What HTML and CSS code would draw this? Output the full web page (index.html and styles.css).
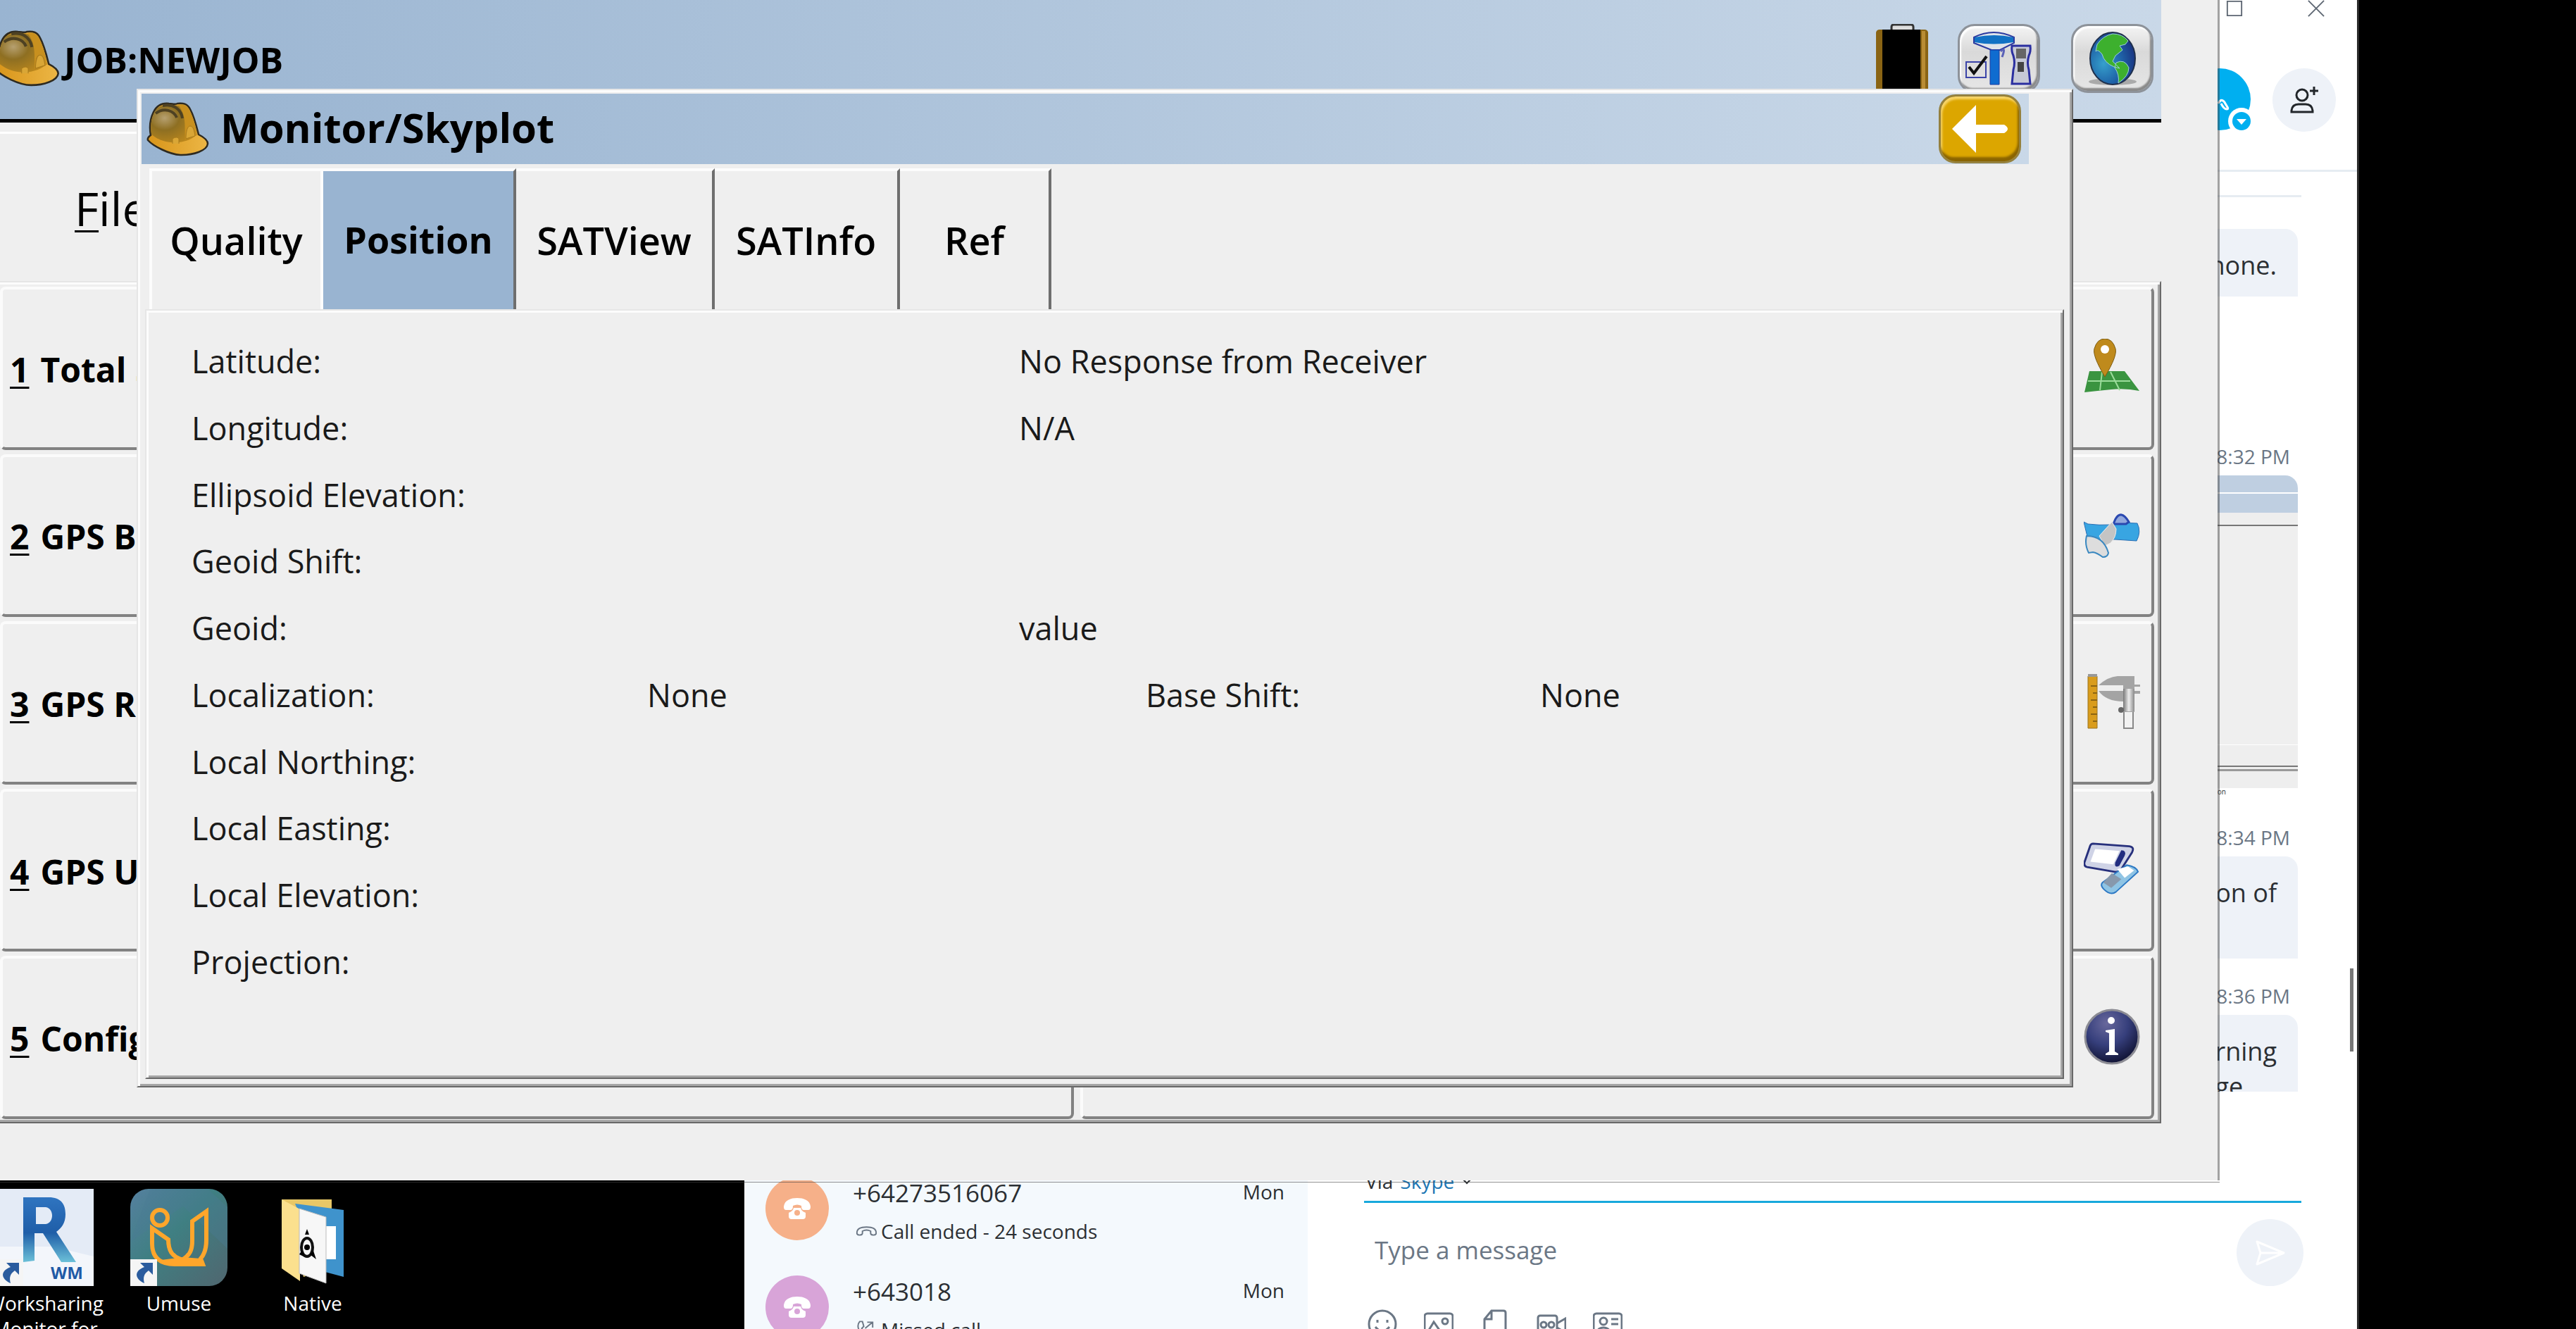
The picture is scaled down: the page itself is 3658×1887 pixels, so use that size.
FILE: index.html
```html
<!DOCTYPE html>
<html lang="en">
<head>
<meta charset="utf-8">
<title>Monitor/Skyplot</title>
<link rel="stylesheet" href="styles.css">
</head>
<body>
<svg class="defs" aria-hidden="true">
  <defs>
    <linearGradient id="brim" x1="0" y1="0" x2="1" y2="0"><stop offset="0" stop-color="#d8951a"/><stop offset="1" stop-color="#ecb645"/></linearGradient>
    <radialGradient id="shell" cx=".3" cy=".35" r=".8"><stop offset="0" stop-color="#b6a070"/><stop offset=".4" stop-color="#8e6f22"/><stop offset="1" stop-color="#c08a1c"/></radialGradient>
    <linearGradient id="metal" x1="0" y1="0" x2="1" y2="0"><stop offset="0" stop-color="#777"/><stop offset=".5" stop-color="#eee"/><stop offset="1" stop-color="#888"/></linearGradient>
    <radialGradient id="sea" cx=".3" cy=".6" r=".8"><stop offset="0" stop-color="#36a0cc"/><stop offset=".5" stop-color="#1f63a8"/><stop offset="1" stop-color="#182878"/></radialGradient>
    <radialGradient id="orb" cx=".4" cy=".25" r=".8"><stop offset="0" stop-color="#68689c"/><stop offset=".5" stop-color="#363f7c"/><stop offset="1" stop-color="#0c0e2c"/></radialGradient>
    <linearGradient id="umuse" x1="0" y1="0" x2="1" y2="1"><stop offset="0" stop-color="#55809f"/><stop offset=".45" stop-color="#3f7f82"/><stop offset="1" stop-color="#50666f"/></linearGradient>
    <linearGradient id="revit" x1="0" y1="0" x2="0" y2="1"><stop offset="0" stop-color="#2f74c0"/><stop offset=".55" stop-color="#1f5ea8"/><stop offset="1" stop-color="#6cc0d8"/></linearGradient>
    <symbol id="helmet" viewBox="0 0 90 77">
      <path d="M7 47C5 36 6 24 11 14 16 4 24 1 33 2c5 0 8 2 12 0 8-1 14 0 18 8 6 11 9 24 12 36 8 4 13 8 13 13-1 10-20 16-37 16C34 75 10 62 3 54c-1-3 1-5 4-7z" fill="url(#brim)" stroke="#2e2a20" stroke-width="2.500"/>
      <path d="M8 46C6 34 8 22 13 13 18 5 26 4 34 4c10 0 18 1 24 8 8 10 12 22 14 34-10 12-42 18-64 0z" fill="url(#shell)"/>
      <path d="M46 4c8-2 14 1 17 9 5 10 8 22 10 34l-17 6c-1-20 2-34-10-49z" fill="#c8901f"/>
      <path d="M24 5c14-3 26 4 28 18M14 16c12-9 26-4 30 6" fill="none" stroke="#4e4122" stroke-width="4"/>
      <path d="M57 52c0-10 2-18 6-18 5 0 6 8 7 14zM38 59v-7q6-4 9 0v7" fill="#d9a636" stroke="#a87a1c" stroke-width="1"/>
    </symbol>
    <symbol id="phone" viewBox="0 0 40 32">
      <path d="M1 13C2 4 11 1 20 1s18 3 19 12c0 4-1 5-4 5h-5c-3 0-4-2-4-6-4-2-8-2-12 0 0 4-1 6-4 6H5c-3 0-4-1-4-5z" fill="#fff"/>
      <path d="M15 15h10c1 4 3 5 7 7v5q0 4-4 4H12q-4 0-4-4v-5c4-2 6-3 7-7z" fill="#fff"/><circle cx="20" cy="22" r="4" class="hub"/>
    </symbol>
    <symbol id="shortcut" viewBox="0 0 38 38">
      <path d="M0 0h38v38H0z" fill="#f5f5f5"/><path d="M14 5h18v17l-6-6c-7 5-8 10-6 18C5 27 6 16 20 11z" fill="#2b5c9e"/>
    </symbol>
  </defs>
</svg>

<main class="desktop">
  <section class="shortcuts" aria-label="Desktop shortcuts">
    <a href="#worksharing" class="shortcut">
      <svg viewBox="0 0 138 138"><path d="M0 0h138v138H0z" fill="#e4ebf6"/><path d="M0 82h80l58 14v42H0z" fill="#f3f6fb"/>
        <path d="M38 12h36c18 0 24 10 24 24 0 13-6 20-13 25l28 43H92L66 63H54v39l-16 2z" fill="url(#revit)"/><path d="M56 26h14c12 2 12 22 0 24H56z" fill="#e4ebf6"/>
        <text x="77" y="128" class="wm">WM</text><use href="#shortcut" y="100" width="38" height="38"/></svg>
      <span>Worksharing<br>Monitor for</span>
    </a>
    <a href="#umuse" class="shortcut">
      <svg viewBox="0 0 138 138"><rect width="138" height="138" rx="26" fill="url(#umuse)"/><path d="M0 75l75-50 63 60V26L110 0H28z" fill="#4a7a95" opacity=".35"/>
        <circle cx="42" cy="41" r="11" fill="none" stroke="#ffa62b" stroke-width="6"/>
        <path d="M31 56v22c0 20 12 29 32 29h40l-3-8c6-7 8-16 8-26V32L88 46v28c0 14-4 20-14 27-14-5-20-12-20-29z" fill="none" stroke="#ffa62b" stroke-width="6"/>
        <path d="M44 101l30-4 26 2 4 9H62z" fill="#ffa62b"/><use href="#shortcut" y="100" width="38" height="38"/></svg>
      <span>Umuse</span>
    </a>
    <a href="#native" class="shortcut">
      <svg viewBox="0 0 138 138"><path d="M25 15h71v98l-40 12z" fill="#e8c766"/><path d="M44 21l69 9v95l-30-8z" fill="#3f93cc"/><path d="M88 53h14v47H84z" fill="#fff"/><path d="M25 15l26 14v102L25 113z" fill="#fbe08e"/>
        <path d="M50 28l38 12v94l-38-14z" fill="#f7f7f7" stroke="#bbb"/><ellipse cx="61" cy="83" rx="8" ry="13" fill="none" stroke="#111" stroke-width="4"/><circle cx="61" cy="83" r="4"/><path d="M58 65l3-8 3 8zM50 93l4-6 4 10zM65 93l5-5 4 12z"/></svg>
      <span>Native</span>
    </a>
  </section>

  <section class="skype" aria-label="Skype">
    <ul class="calls">
      <li class="call orange">
        <span class="avatar"><svg viewBox="0 0 40 32"><use href="#phone"/></svg></span>
        <div class="who"><strong>+64273516067</strong>
          <span class="what"><svg viewBox="0 0 32 16"><path d="M2 12C1 4 8 2 16 2s15 2 14 10c-2 3-8 2-8-1V8c-4-2-8-2-12 0v3c0 3-6 4-8 1z"/></svg>Call ended - 24 seconds</span></div>
        <time>Mon</time>
      </li>
      <li class="call violet">
        <span class="avatar"><svg viewBox="0 0 40 32"><use href="#phone"/></svg></span>
        <div class="who"><strong>+643018</strong>
          <span class="what missed"><svg viewBox="0 0 32 28"><path d="M6 2q-5 6 0 14 6 9 14 11l3-5-6-5-4 2-4-7 3-3-2-7zM14 12L25 3M17 3h8v8"/></svg>Missed call</span></div>
        <time>Mon</time>
      </li>
    </ul>

    <div class="chat">
      <header class="chat-head">
        <div class="caption">
          <button type="button" aria-label="Maximise"><svg viewBox="0 0 26 26"><path d="M2 2h22v22H2z"/></svg></button>
          <button type="button" aria-label="Close"><svg viewBox="0 0 26 26"><path d="M1 1l24 24M25 1L1 25"/></svg></button>
        </div>
        <div class="people">
          <svg class="contact" viewBox="0 0 88 88"><circle cx="44" cy="44" r="44" fill="#00aff0"/><path d="M42 50c4-8 8-4 10 0s6 8 2 8-8-8-8-8" fill="none" stroke="#fff" stroke-width="3"/><circle cx="75" cy="75" r="19" fill="#fff"/><circle cx="75" cy="75" r="13" fill="#00aff0"/><path d="M68 72h14l-7 8z" fill="#fff"/></svg>
          <button type="button" class="add" aria-label="Add people"><svg viewBox="0 0 40 40"><circle cx="17" cy="13" r="8"/><path d="M2 37v-2q1-9 10-9h10q9 0 10 9v2zM34 1v12M28 7h12"/></svg></button>
        </div>
      </header>
      <div class="history">
        <hr>
        <p class="bubble one">phone.</p>
        <time>8:32 PM</time>
        <div class="photo"></div>
        <small>Projection</small>
        <time>8:34 PM</time>
        <p class="bubble two">on of</p>
        <time>8:36 PM</time>
        <p class="bubble three"><span>rning<br>ge</span></p>
      </div>
      <form class="composer">
        <div class="via">Via <a href="#skype">Skype</a> <svg viewBox="0 0 16 10"><path d="M1 1l7 7 7-7"/></svg></div>
        <div class="entry"><input type="text" placeholder="Type a message" aria-label="Type a message">
          <button type="button" aria-label="Send"><svg viewBox="0 0 44 36"><path d="M3 2l38 16L3 34l5-16zM8 18h32"/></svg></button></div>
        <div class="tools">
          <button type="button" aria-label="Emoji"><svg viewBox="0 0 42 42"><circle cx="21" cy="21" r="19"/><path d="M14 15v4M28 15v4M11 25q10 12 20 0"/></svg></button>
          <button type="button" aria-label="Picture"><svg viewBox="0 0 42 42"><rect x="1" y="6" width="40" height="32" rx="4"/><circle cx="30" cy="17" r="4"/><path d="M3 36l11-18 14 20"/></svg></button>
          <button type="button" aria-label="File"><svg viewBox="0 0 42 42"><path d="M16 2h17q3 0 3 3v34H6V14zM16 2v12H6"/></svg></button>
          <button type="button" aria-label="Video"><svg viewBox="0 0 42 42"><rect x="2" y="9" width="27" height="26" rx="3"/><circle cx="10" cy="22" r="4"/><circle cx="21" cy="22" r="4"/><path d="M29 20l12-7v20l-12-7"/></svg></button>
          <button type="button" aria-label="Contact"><svg viewBox="0 0 42 42"><rect x="1" y="6" width="40" height="32" rx="4"/><circle cx="15" cy="17" r="5"/><path d="M5 36q1-10 10-10t10 10M26 14h10M26 21h10"/></svg></button>
        </div>
      </form>
      <span class="thumb"></span>
    </div>
  </section>

  <section class="app" aria-label="Survey application">
    <header class="title">
      <svg class="helmet" viewBox="0 0 90 77"><use href="#helmet"/></svg>
      <h1>JOB:NEWJOB</h1>
      <svg class="battery" viewBox="0 0 76 98"><rect x="23" y="1" width="31" height="12" rx="3" fill="#ddd" stroke="#333" stroke-width="3"/><path d="M1 98V12q1-4 5-4h64q4 0 5 4v86z" fill="#8a6414"/><path d="M10 8h54v90H10z"/><path d="M66 10h5v88h-5z" fill="#b98c34"/></svg>
      <button type="button" class="tile" aria-label="Receiver settings"><svg viewBox="0 0 104 84"><path d="M16 12q28-14 57 0v8L53 30H41L16 20z" fill="#dfe4ea" stroke="#2b3aa0" stroke-width="2"/><path d="M17 12q28-6 55 0v7q-28 5-55 0z" fill="#1272c4"/><path d="M39 30h13v49H39z" fill="#0f6cd0" stroke="#1a3aa0"/><path d="M54 32q8-8 2 8" fill="none" stroke="#5b62b8" stroke-width="3"/><path d="M5 47h28v22H5z" fill="none" stroke="#3b44a8" stroke-width="2"/><path d="M9 54l7 9L34 39" fill="none" stroke="#111" stroke-width="4"/><path d="M70 24h26q1 8-2 14-3 10 0 20l2 20H70l2-20q3-10 0-20-3-6-2-14z" fill="#c6c9d6" stroke="#2b2fa0" stroke-width="3"/><path d="M76 28h14v14H76z" fill="#666"/><path d="M78 47h9v14h-9z" fill="#444"/></svg></button>
      <button type="button" class="tile" aria-label="World"><svg viewBox="0 0 104 84"><ellipse cx="52" cy="75" rx="34" ry="5" fill="#aaa"/><ellipse cx="52" cy="42" rx="32" ry="37" fill="url(#sea)" stroke="#20304c" stroke-width="2"/><path d="M30 22q8-12 22-15 14 0 22 10l-4 5-8 2 4 6-10 8-4 8 10 10-8-2q-14-6-17-18-6-8-9-4zM57 48q12-6 18 7 0 12-15 22 2-12-5-22z" fill="#3db02e" stroke="#9cd0d8" stroke-width="1"/></svg></button>
    </header>
    <nav class="menu"><a href="#file"><u>F</u>ile</a></nav>
    <div class="board">
      <button type="button"><u>1</u> Total Station</button>
      <button type="button" class="side" aria-label="Map"><svg viewBox="0 0 80 80"><path d="M8 46h50l21 28q-20-4-40-2T1 76z" fill="#3a9440"/><path d="M6 60h60M26 47l-3 26M38 47l13 26" stroke="#9bdc9b" stroke-width="2" fill="none"/><path d="M30 54Q12 24 15 14 19 0 30 0t15 14q3 10-15 40z" fill="#bf8a1c" stroke="#7d5c12"/><ellipse cx="30" cy="15" rx="6" ry="6" fill="#fff"/></svg></button>
      <button type="button"><u>2</u> GPS Base</button>
      <button type="button" class="side" aria-label="Satellite"><svg viewBox="0 0 80 80"><path d="M0 22l6 3q15 2 34 1l12-3 24 1q6 12-1 25l-30-2H6z" fill="#38a5e2" stroke="#2b6fb4"/><path d="M45 18q8-14 19 4l-4 3H42z" fill="#93a8dc" stroke="#2a48b0" stroke-width="3"/><path d="M22 42l18-20 6 10q0 12-8 20l-8 4z" fill="#c4c4c4" stroke="#eee"/><path d="M4 42q24 0 31 24-1 6-8 6-8-6-14-7l-6 1Q1 54 4 42z" fill="#ddd" stroke="#3a88c0" stroke-width="2"/></svg></button>
      <button type="button"><u>3</u> GPS Rover</button>
      <button type="button" class="side" aria-label="Measure"><svg viewBox="0 0 80 80"><path d="M6 4h13v74H6z" fill="#d99c1c" stroke="#9a7420"/><path d="M6 3h13" stroke="#999" stroke-width="4"/><path d="M10 18h9M13 28h6M10 38h9M13 48h6M10 58h9M13 68h6" stroke="#8c6412" stroke-width="2"/><path d="M57 50h13v28H57z" fill="#f2f2f2" stroke="#888" stroke-width="2"/><path d="M21 17Q34 5 48 4h24v12h8v3h-8v6h8v4h-8v26H56V40q-24 0-35-15h35v-8z" fill="#a4a4a4"/><path d="M56 22h16v32H56z" fill="url(#metal)"/><circle cx="53" cy="52" r="4" fill="#666"/></svg></button>
      <button type="button"><u>4</u> GPS Utilities</button>
      <button type="button" class="side" aria-label="Devices"><svg viewBox="0 0 84 80"><path d="M14 2l54 4q8 1 4 9L56 40q-3 5-10 4L5 37q-5-1-4-7L9 7q1-5 5-5z" fill="#cfd3e6" stroke="#27307c" stroke-width="3"/><path d="M17 10l36 3-9 20-34-4z" fill="#fff"/><path d="M56 12q8 0 5 8l-8 15q-8 4-6-5z" fill="#222d80"/><path d="M64 34q14 2 17 10L48 74q-8 6-18-4-6-6-2-10z" fill="#8fc4e4" stroke="#2b78c4" stroke-width="2"/><path d="M50 40l16-4 9 6-14 11z" fill="#fff"/><path d="M42 46l14 9-15 13-12-8z" fill="#8798ac"/></svg></button>
      <button type="button"><u>5</u> Configure</button>
      <button type="button" class="side" aria-label="Information"><svg viewBox="0 0 80 80"><circle cx="40" cy="40" r="38" fill="url(#orb)" stroke="#8c8c94" stroke-width="3"/><circle cx="39" cy="17" r="5" fill="#fff"/><path d="M31 31l13-2v32l5 3v2H31v-2l5-3V35l-5-2z" fill="#fff"/></svg></button>
    </div>

    <section class="dialog" role="dialog" aria-label="Monitor/Skyplot">
      <header class="title">
        <svg class="helmet" viewBox="0 0 90 77"><use href="#helmet"/></svg>
        <h2>Monitor/Skyplot</h2>
        <button type="button" class="tile back" aria-label="Back"><svg viewBox="0 0 104 84"><path d="M12 42L46 8v28h40q10 6 0 12H46v28z" fill="#fff"/></svg></button>
      </header>
      <div class="tabs" role="tablist">
        <button type="button" role="tab" class="w1">Quality</button>
        <button type="button" role="tab" class="w2" aria-selected="true">Position</button>
        <button type="button" role="tab" class="w3">SATView</button>
        <button type="button" role="tab" class="w4">SATInfo</button>
        <button type="button" role="tab" class="w5">Ref</button>
      </div>
      <dl class="panel">
        <dt>Latitude:</dt><dd class="value">No Response from Receiver</dd>
        <dt>Longitude:</dt><dd class="value">N/A</dd>
        <dt>Ellipsoid Elevation:</dt><dd class="value"></dd>
        <dt>Geoid Shift:</dt><dd class="value"></dd>
        <dt>Geoid:</dt><dd class="value">value</dd>
        <dt>Localization:</dt><dd class="near">None</dd><dt class="base">Base Shift:</dt><dd class="far">None</dd>
        <dt>Local Northing:</dt><dd class="value"></dd>
        <dt>Local Easting:</dt><dd class="value"></dd>
        <dt>Local Elevation:</dt><dd class="value"></dd>
        <dt>Projection:</dt><dd class="value"></dd>
      </dl>
    </section>
  </section>
</main>
</body>
</html>
```
FILE: styles.css
```css
* { box-sizing: border-box; }
body { margin: 0; background: #000; font-family: "Open Sans", "Noto Sans", sans-serif; color: #000; }
h1, h2, p, ul, dl, dd { margin: 0; padding: 0; }
button { font: inherit; color: inherit; background: none; border: 0; padding: 0; }
svg { display: block; flex: none; }
a { color: inherit; text-decoration: none; }
.defs { position: absolute; width: 0; height: 0; }

.desktop { position: relative; height: 100vh; overflow: hidden; background: #000; }

/* desktop shortcuts */
.shortcuts { position: absolute; left: -31px; top: 1688px; display: flex; }
.shortcut { width: 190px; display: flex; flex-direction: column; align-items: center; gap: 6px; color: #fff; font-size: 28px; line-height: 36px; text-align: center; }
.shortcut svg { width: 138px; height: 138px; }
.wm { font: bold 24px "Open Sans", sans-serif; fill: #1f5aa6; }

/* messenger window */
.skype { position: absolute; left: 1057px; right: 308px; top: 0; bottom: 0; display: grid; grid-template-columns: 800px 1fr; background: #fff; border-right: 3px solid #2b2b2b; color: #2b2f33; overflow: hidden; }
.calls { list-style: none; background: #f4f9fd; display: flex; flex-direction: column; justify-content: flex-end; height: calc(100vh + 39px); }
.call { height: 140px; display: flex; align-items: center; padding: 0 33px 0 30px; gap: 34px; }
.avatar { width: 90px; height: 90px; border-radius: 50%; display: grid; place-items: center; }
.avatar svg { width: 40px; height: 32px; }
.orange .avatar, .orange .hub { background: #f6b089; fill: #f6b089; }
.violet .avatar, .violet .hub { background: #d8a4d8; fill: #d8a4d8; }
.who { flex: 1; display: flex; flex-direction: column; gap: 8px; padding-top: 10px; }
.who strong { font-weight: 400; font-size: 35px; line-height: 46px; }
.what { display: flex; align-items: center; gap: 5px; padding-left: 4px; font-size: 28px; line-height: 46px; }
.what svg { width: 31px; height: 16px; fill: none; stroke: #6b7785; stroke-width: 2px; }
.what.missed svg { height: 28px; }
.call time { align-self: flex-start; margin-top: 26px; font-size: 28px; line-height: 40px; }

.chat { position: relative; display: flex; flex-direction: column; height: 100vh; }
.chat-head { height: 244px; border-bottom: 3px solid #e6ecf2; flex: none; }
.caption { display: flex; justify-content: flex-end; gap: 90px; height: 97px; padding-right: 45px; align-items: flex-start; }
.caption svg { width: 26px; height: 24px; fill: none; stroke: #5d6672; stroke-width: 2px; }
.people { display: flex; justify-content: flex-end; gap: 31px; padding-right: 30px; }
.contact { width: 88px; height: 88px; overflow: visible; }
.add { width: 90px; height: 90px; border-radius: 50%; background: #eef2f8; display: grid; place-items: center; }
.add svg { width: 40px; height: 40px; fill: none; stroke: #22262a; stroke-width: 3px; }

.history { flex: 1; min-height: 0; overflow: hidden; display: flex; flex-direction: column; padding: 33px 84px 0 1000px; font-size: 36px; line-height: 50px; text-align: right; }
.history > * { flex: none; }
.history hr { align-self: stretch; height: 3px; border: 0; margin: 0 -5px 45px 0; background: #e6ecf2; }
.bubble { background: #eef2f8; border-radius: 0 18px 0 0; padding: 27px 30px 0 0; }
.bubble span { display: inline-block; text-align: left; }
.one { height: 96px; }
.two, .three { height: 145px; }
.history time { font-size: 28px; line-height: 40px; color: #6b7785; padding: 0 11px 7px 0; margin-top: 33px; }
.one + time { margin-top: 207px; }
.photo { height: 444px; border-radius: 0 18px 0 0; background: linear-gradient(#bfcfe1 0 24px, #fff 24px 26px, #bfcfe1 26px 53px, #eee 53px 70px, #777 70px 72px, #efefef 72px 382px, #fff 382px 383px, #eee 383px 412px, #777 412px 414px, #eee 414px 417px, #999 417px 420px, #eee 420px); }
.history small { font-size: 10px; line-height: 10px; padding-right: 102px; }
.history small + time { margin-top: 40px; }
.thumb { position: absolute; right: 5px; top: 1375px; width: 5px; height: 118px; background: #777; }

.composer { flex: none; padding: 108px 79px 0 80px; }
.via { display: flex; align-items: center; gap: 10px; height: 47px; font-size: 28px; line-height: 40px; padding: 0 2px 9px; }
.via a { color: #1c76b4; }
.via svg { width: 16px; height: 10px; fill: none; stroke: #2b2f33; stroke-width: 2px; }
.entry { display: flex; align-items: center; justify-content: space-between; height: 144px; border-top: 3px solid #18a9dc; }
.entry input { flex: 1; border: 0; background: none; padding: 0 15px 8px; font: 35px "Open Sans", sans-serif; outline: 0; }
.entry input::placeholder { color: #6b7785; opacity: 1; }
.entry button { width: 95px; height: 95px; margin-right: -3px; border-radius: 50%; background: #eef2f8; display: grid; place-items: center; }
.entry button svg { width: 44px; height: 36px; fill: none; stroke: #fff; stroke-width: 3px; stroke-linejoin: round; }
.tools { display: flex; gap: 38px; height: 38px; padding: 10px 5px 0; overflow: hidden; }
.tools svg { width: 42px; height: 42px; fill: none; stroke: #6b7785; stroke-width: 3px; }

/* survey application window */
.app { position: absolute; left: 0; right: 506px; top: 0; padding: 0 80px 81px 0; background: #efefef; background-clip: padding-box; border-right: 3px solid rgba(70, 70, 70, .5); }
.app::after { content: ""; position: absolute; left: 0; right: -3px; bottom: -3px; height: 1px; background: rgba(70, 70, 70, .6); }
.title { display: flex; align-items: center; background: linear-gradient(90deg, #99b4d1, #c9d8e8); }
.app > .title { height: 174px; border-bottom: 5px solid #000; padding: 0 11px 4px 0; }
.app > .title .helmet { width: 94px; height: 80px; margin-left: -9px; }
.title h1 { flex: 1; font-size: 50px; line-height: 60px; padding: 4px 0 0 6px; }
.battery { width: 76px; height: 98px; margin-right: 41px; }
.tile { width: 117px; height: 98px; display: grid; place-items: center; border-radius: 24px; border: 3px solid #8d9299; background: linear-gradient(#f4f4f4, #d9d9d9 40%, #e6e6e6); box-shadow: inset -2px -4px 2px #8a8a8a, inset 2px 3px 2px #fff; }
.tile svg { width: 104px; height: 84px; }
.tile + .tile { margin-left: 44px; }

.menu { margin-top: 13px; width: 40%; height: 212px; border-top: 3px solid #fff; padding: 60px 0 0 106px; font-size: 66px; line-height: 90px; }
u { text-decoration-thickness: 3px; text-underline-offset: 6px; }

.board, .dialog, .panel { border: 2px solid; border-color: #e6e6e6 #696969 #696969 #e6e6e6; box-shadow: inset 3px 3px #fcfcfc, inset -3px -3px #a6a6a6; background: #efefef; }
.board { margin-left: -10px; height: 1196px; padding: 6px 8px 4px; display: grid; grid-template-columns: 1fr 1fr; grid-auto-rows: 1fr; gap: 6px 9px; }
.board button { display: flex; align-items: center; gap: 16px; padding: 3px 0 0 10px; font-size: 48px; font-weight: 700; border: 4px solid; border-color: #fbfbfb #828282 #828282 #fbfbfb; border-radius: 8px; }
.board .side { justify-content: flex-end; padding: 0 16px 3px 0; }
.side svg { width: 80px; height: 80px; }

/* skyplot dialog */
.dialog { position: absolute; left: 194px; right: 205px; top: 126px; padding: 5px 11px 10px 5px; }
.dialog .title { height: 100px; margin-right: 50px; padding: 0 11px 0 6px; }
.dialog .helmet { width: 90px; height: 77px; }
.title h2 { flex: 1; font-size: 58px; line-height: 70px; padding: 0 0 4px 16px; }
.back { border-color: #95813e; background: #dca600; box-shadow: inset -2px -6px 3px #8a6400, inset 2px 4px 3px #f7d468; }
.tabs { display: flex; height: 200px; margin: 6px 0 0 11px; }
.tabs button { border: 0 solid #6e6e6e; border-right-width: 4px; border-top: 4px solid #fcfcfc; font-size: 54px; font-weight: 600; }
.tabs .w1 { width: 247px; border-left: 4px solid #fcfcfc; border-right-color: #fcfcfc; }
.tabs .w2 { width: 274px; background: #99b4d1; font-size: 52px; font-weight: 700; padding-bottom: 4px; }
.tabs .w3 { width: 282px; }
.tabs .w4 { width: 263px; }
.tabs .w5 { width: 215px; }
.panel { height: 1093px; margin-left: 5px; padding: 25px 0 117px 64px; display: grid; grid-template-columns: 647px 528px 180px 560px 1fr; grid-template-rows: repeat(10, 1fr); align-items: center; font-size: 45px; line-height: 60px; color: #1a1a1a; }
.panel dt { grid-column: 1; }
.panel .value { grid-column: 3 / -1; min-height: 60px; }
.panel .near { grid-column: 2; }
.panel .base { grid-column: 4; }
.panel .far { grid-column: 5; }
```
